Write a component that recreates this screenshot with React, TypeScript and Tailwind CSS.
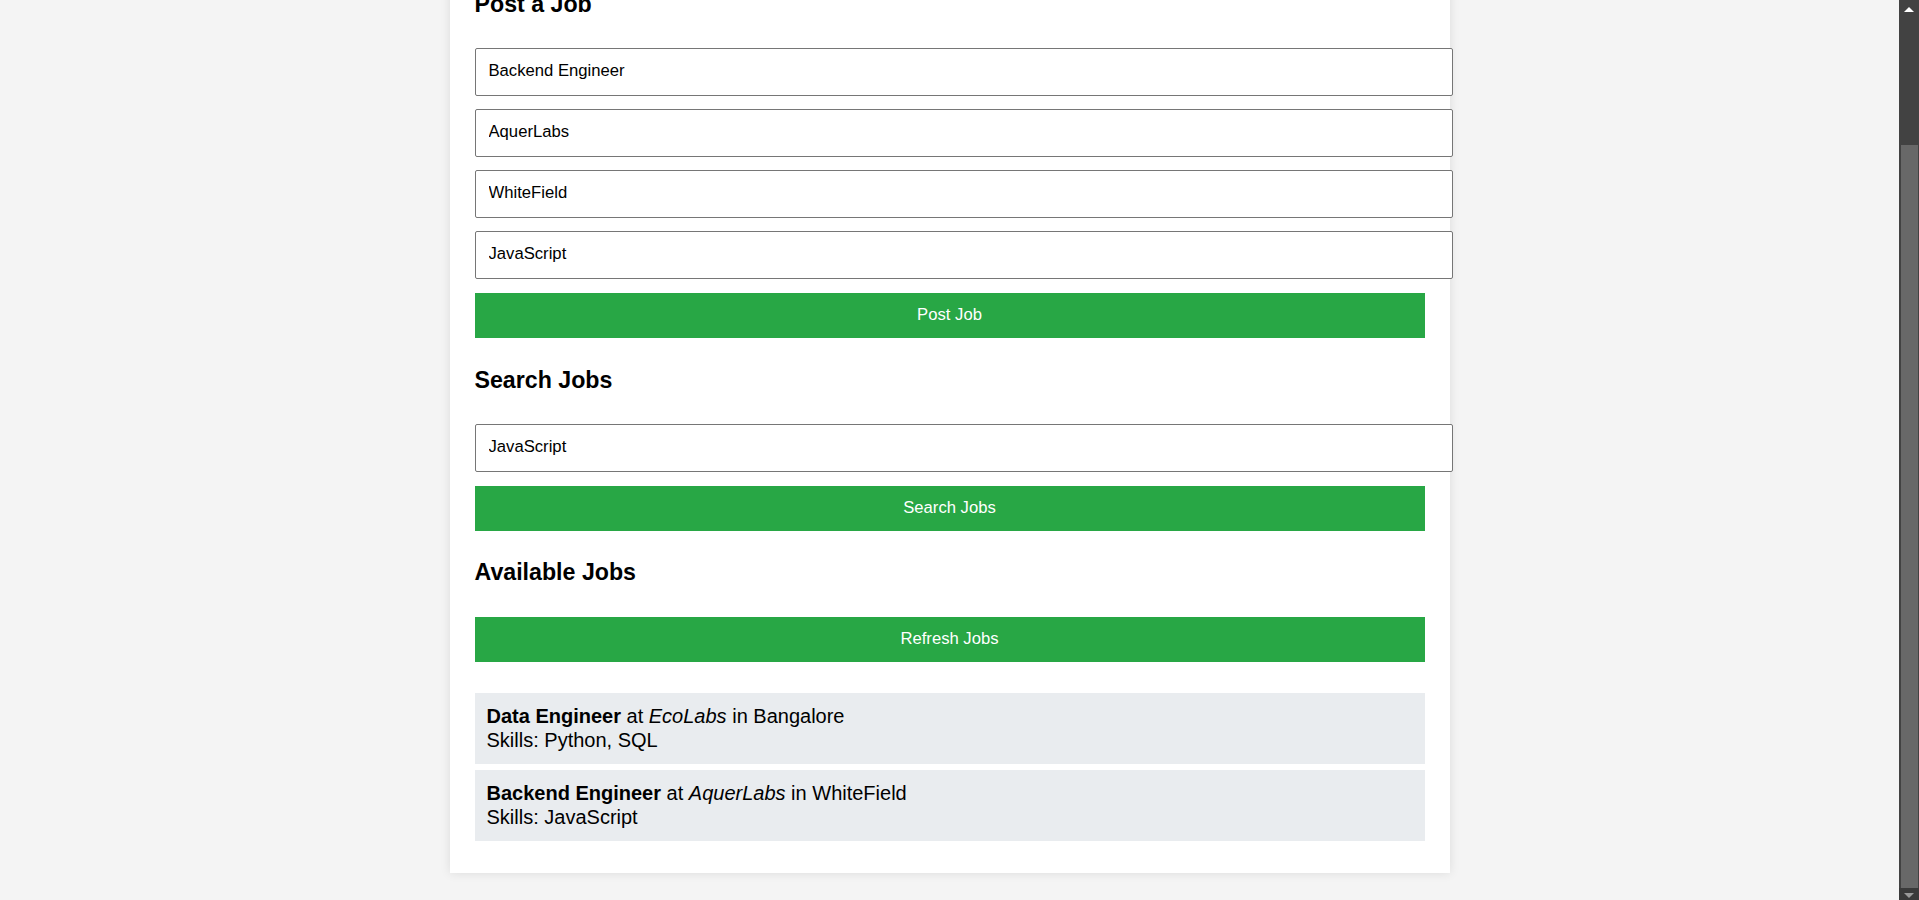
import React from 'react';

interface Job {
  title: string;
  company: string;
  location: string;
  skills: string[];
}

const jobs: Job[] = [
  { title: 'Data Engineer', company: 'EcoLabs', location: 'Bangalore', skills: ['Python', 'SQL'] },
  { title: 'Backend Engineer', company: 'AquerLabs', location: 'WhiteField', skills: ['JavaScript'] },
];

const inputClass =
  'block w-[978px] max-w-none h-[48px] px-[13px] pb-[2px] mb-[13px] bg-white border border-[#767676] rounded-[2px] text-[16.67px] text-black outline-none';

const buttonClass =
  'block w-full h-[45px] pb-[2px] bg-[#28a745] text-white text-[16.67px] cursor-pointer';

const Scrollbar: React.FC = () => (
  <div className="w-[20px] shrink-0 bg-[#424242] flex flex-col">
    <div className="h-[145px] flex justify-center">
      <div className="mt-[7px] w-0 h-0 border-x-[5px] border-b-[5px] border-x-transparent border-b-white" />
    </div>
    <div className="h-[743px] ml-[2px] mr-px bg-[#686868]" />
    <div className="flex-1 flex justify-center bg-[#3a3a3a]">
      <div className="mt-[5px] w-0 h-0 border-x-[5px] border-t-[5px] border-x-transparent border-t-[#9a9a9a]" />
    </div>
  </div>
);

const App: React.FC = () => {
  return (
    <div
      className="h-screen flex bg-[#f4f4f4] text-black"
      style={{ fontFamily: '"Liberation Sans", Arial, sans-serif' }}
    >
      <div className="flex-1 overflow-y-scroll flex flex-col-reverse [scrollbar-width:none]">
        <div className="shrink-0 pt-[20px] pb-[27px]">
          <div className="mx-auto w-[1000px] bg-white px-[25px] pt-[25px] pb-[32px] shadow-[0_0_10px_rgba(0,0,0,0.1)]">
            <h1 className="text-[32px] leading-[37px] font-bold text-center mb-[68px]">Job Portal</h1>

            <h2 className="text-[23.2px] leading-[27px] font-bold mb-[30px]">Post a Job</h2>
            <input className={inputClass} defaultValue="Backend Engineer" placeholder="Job Title" />
            <input className={inputClass} defaultValue="AquerLabs" placeholder="Company" />
            <input className={inputClass} defaultValue="WhiteField" placeholder="Location" />
            <input className={`${inputClass} !mb-0`} defaultValue="JavaScript" placeholder="Skills" />
            <button className={`${buttonClass} mt-[14px]`}>Post Job</button>

            <h2 className="text-[23.2px] leading-[27px] font-bold mt-[29px] mb-[30px]">Search Jobs</h2>
            <input className={`${inputClass} !mb-0`} defaultValue="JavaScript" placeholder="Search by skill" />
            <button className={`${buttonClass} mt-[14px]`}>Search Jobs</button>

            <h2 className="text-[23.2px] leading-[27px] font-bold mt-[28px] mb-[31px]">Available Jobs</h2>
            <button className={buttonClass}>Refresh Jobs</button>

            <ul className="mt-[31px] flex flex-col gap-[6px]">
              {jobs.map((job) => (
                <li key={job.title} className="bg-[#e9ecef] px-[12px] py-[12px] text-[20px] leading-[23.5px]">
                  <strong className="font-bold">{job.title}</strong> at <em className="italic">{job.company}</em> in{' '}
                  {job.location}
                  <br />
                  Skills: {job.skills.join(', ')}
                </li>
              ))}
            </ul>
          </div>
        </div>
      </div>
      <Scrollbar />
    </div>
  );
};

export default App;
